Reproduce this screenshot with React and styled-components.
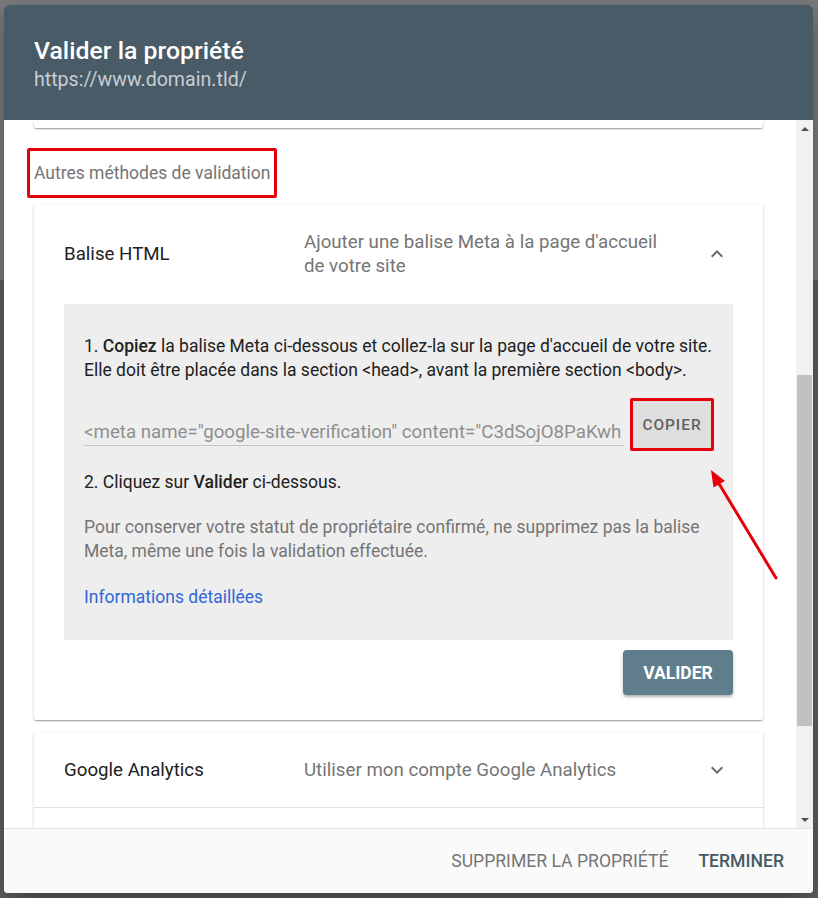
import React from "react";
import styled, { createGlobalStyle } from "styled-components";

const Global = createGlobalStyle`
  html, body { margin: 0; padding: 0; }
  body {
    width: 818px;
    height: 898px;
    overflow: hidden;
    background: linear-gradient(to bottom, #7b7b7d 0, #7b7b7d 280px, #5f5f60 280px, #5f5f60 100%);
    font-family: Roboto, "Noto Sans", "Liberation Sans", sans-serif;
  }
  * { box-sizing: border-box; }
`;

const Dialog = styled.div`
  position: relative;
  margin: 5px 0 0 4px;
  width: 809px;
  height: 888px;
  border-radius: 4px;
  overflow: hidden;
  display: flex;
  flex-direction: column;
  background: #fff;
  box-shadow: 0 8px 24px rgba(0, 0, 0, 0.35);
`;

const Header = styled.header`
  height: 115px;
  flex: none;
  background: #485b67;
  padding: 31px 30px 0 30px;
`;

const Title = styled.h1`
  margin: 0;
  font-size: 24.8px;
  line-height: 30px;
  font-weight: 500;
  color: #ffffff;
`;

const Url = styled.div`
  margin-top: 2px;
  font-size: 19.6px;
  line-height: 24px;
  color: #c8cfd4;
`;

const Body = styled.div`
  flex: 1;
  display: flex;
  min-height: 0;
`;

const Scroll = styled.div`
  flex: 1;
  overflow: hidden;
  padding: 0 33px 0 30px;
`;

const Scrollbar = styled.div`
  width: 17px;
  flex: none;
  background: #f1f1f1;
  display: flex;
  flex-direction: column;
  align-items: stretch;
`;

const ScrollArrow = styled.div`
  height: 17px;
  display: flex;
  align-items: center;
  justify-content: center;
  &::before {
    content: "";
    width: 0;
    height: 0;
    border-left: 4px solid transparent;
    border-right: 4px solid transparent;
    ${(p) =>
      p.$down
        ? "border-top: 4px solid #505050;"
        : "border-bottom: 4px solid #505050;"}
  }
`;

const Track = styled.div`
  flex: 1;
  padding: 238px 1px 0 1px;
`;

const Thumb = styled.div`
  height: 351px;
  background: #c1c1c1;
`;

const Card = styled.section`
  background: #fff;
  border-radius: 2px;
  box-shadow: 0 1px 3px rgba(0, 0, 0, 0.2), 0 1px 1px rgba(0, 0, 0, 0.14),
    0 2px 1px -1px rgba(0, 0, 0, 0.12);
`;

const StubCard = styled(Card)`
  height: 8px;
  border-radius: 0 0 2px 2px;
`;

const Highlight = styled.div`
  display: flex;
  align-items: center;
  justify-content: center;
  border: 3px solid #e5000a;
  border-radius: 2px;
`;

const LabelBox = styled(Highlight)`
  margin: 20px 0 6px -7px;
  width: 250px;
  height: 50px;
  justify-content: flex-start;
  padding-left: 4px;
`;

const SectionLabel = styled.div`
  font-size: 17.5px;
  line-height: 24px;
  color: #757575;
`;

const MethodCard = styled(Card)`
  padding-bottom: ${(p) => p.$pb || 0}px;
  margin-bottom: 12px;
`;

const Row = styled.div`
  display: flex;
  align-items: center;
  padding: 26px 34px ${(p) => (p.$divider ? "25px" : "26px")} 30px;
  border-bottom: ${(p) => (p.$divider ? "1px solid #e0e0e0" : "none")};
`;

const RowTitle = styled.div`
  width: 240px;
  flex: none;
  font-size: 18.7px;
  line-height: 24px;
  color: #212121;
`;

const RowDesc = styled.div`
  flex: 1;
  margin-right: 40px;
  font-size: 18.7px;
  line-height: 24px;
  color: #757575;
`;

const Chevron = styled.svg`
  width: 24px;
  height: 24px;
  flex: none;
  fill: #6b6b6b;
`;

const Panel = styled.div`
  margin: 0 30px;
  background: #eeeeee;
  padding: 30px 19px 31px 20px;
`;

const Para = styled.p`
  margin: ${(p) => p.$mt || 0}px 0 0 0;
  font-size: 17.5px;
  line-height: 24px;
  color: ${(p) => (p.$muted ? "#757575" : "#212121")};
  white-space: nowrap;
  b { font-weight: 500; color: #212121; }
`;

const CopyRow = styled.div`
  margin-top: 16px;
  display: flex;
  align-items: flex-start;
  gap: 6px;
`;

const MetaField = styled.div`
  flex: 1;
  min-width: 0;
  margin-top: 18px;
  height: 30px;
  padding-top: 3px;
  border-bottom: 1px solid #c4c4c4;
  overflow: hidden;
  white-space: nowrap;
  font-size: 18.7px;
  line-height: 26px;
  color: #8e8e8e;
`;

const CopyBox = styled(Highlight)`
  width: 84px;
  height: 53px;
  background: #dedede;
  font-size: 15.4px;
  font-weight: 500;
  letter-spacing: 1px;
  color: #616161;
`;

const Link = styled.a`
  display: block;
  margin-top: 22px;
  font-size: 17.5px;
  line-height: 24px;
  color: #3367d6;
  text-decoration: none;
`;

const Actions = styled.div`
  display: flex;
  justify-content: flex-end;
  padding: 10px 30px 0 0;
`;

const PrimaryButton = styled.button`
  width: 110px;
  height: 45px;
  border: none;
  border-radius: 4px;
  background: #607d8b;
  color: #fff;
  font-family: inherit;
  font-size: 17.5px;
  font-weight: 700;
  box-shadow: 0 2px 3px rgba(0, 0, 0, 0.3);
`;

const Footer = styled.footer`
  height: 65px;
  flex: none;
  background: #fafafa;
  border-top: 1px solid #e4e4e4;
  display: flex;
  align-items: center;
  justify-content: flex-end;
  gap: 30px;
  padding-right: 29px;
`;

const TextButton = styled.button`
  border: none;
  background: none;
  padding: 0;
  font-family: inherit;
  font-size: 17.6px;
  font-weight: ${(p) => (p.$primary ? 500 : 400)};
  color: ${(p) => (p.$primary ? "#455a64" : "#757575")};
`;

const Annotation = styled.svg`
  position: absolute;
  left: 690px;
  top: 455px;
  width: 100px;
  height: 130px;
  pointer-events: none;
`;

const ExpandLess = () => (
  <Chevron viewBox="0 0 24 24">
    <path d="M12 8l-6 6 1.41 1.41L12 10.83l4.59 4.58L18 14z" />
  </Chevron>
);

const ExpandMore = () => (
  <Chevron viewBox="0 0 24 24">
    <path d="M16.59 8.59L12 13.17 7.41 8.59 6 10l6 6 6-6z" />
  </Chevron>
);

export default function App() {
  return (
    <>
      <Global />
      <Dialog>
        <Header>
          <Title>Valider la propriété</Title>
          <Url>https://www.domain.tld/</Url>
        </Header>
        <Body>
          <Scroll>
            <StubCard />
            <LabelBox>
              <SectionLabel>Autres méthodes de validation</SectionLabel>
            </LabelBox>
            <MethodCard $pb={25}>
              <Row>
                <RowTitle>Balise HTML</RowTitle>
                <RowDesc>Ajouter une balise Meta à la page d'accueil de votre site</RowDesc>
                <ExpandLess />
              </Row>
              <Panel>
                <Para>
                  1. <b>Copiez</b> la balise Meta ci-dessous et collez-la sur la page d'accueil de votre site.
                  <br />
                  Elle doit être placée dans la section &lt;head&gt;, avant la première section &lt;body&gt;.
                </Para>
                <CopyRow>
                  <MetaField>&lt;meta name="google-site-verification" content="C3dSojO8PaKwh</MetaField>
                  <CopyBox>COPIER</CopyBox>
                </CopyRow>
                <Para $mt={19}>
                  2. Cliquez sur <b>Valider</b> ci-dessous.
                </Para>
                <Para $mt={21} $muted>
                  Pour conserver votre statut de propriétaire confirmé, ne supprimez pas la balise
                  <br />
                  Meta, même une fois la validation effectuée.
                </Para>
                <Link href="#">Informations détaillées</Link>
              </Panel>
              <Actions>
                <PrimaryButton>VALIDER</PrimaryButton>
              </Actions>
            </MethodCard>
            <MethodCard $pb={60}>
              <Row $divider>
                <RowTitle>Google Analytics</RowTitle>
                <RowDesc>Utiliser mon compte Google Analytics</RowDesc>
                <ExpandMore />
              </Row>
            </MethodCard>
          </Scroll>
          <Scrollbar>
            <ScrollArrow />
            <Track>
              <Thumb />
            </Track>
            <ScrollArrow $down />
          </Scrollbar>
        </Body>
        <Footer>
          <TextButton>SUPPRIMER LA PROPRIÉTÉ</TextButton>
          <TextButton $primary>TERMINER</TextButton>
        </Footer>
        <Annotation viewBox="0 0 100 130">
          <line x1="82" y1="118" x2="24" y2="22" stroke="#e5000a" strokeWidth="3" strokeLinecap="round" />
          <polygon points="17,10 31,21 19.5,27.5" fill="#e5000a" />
        </Annotation>
      </Dialog>
    </>
  );
}
